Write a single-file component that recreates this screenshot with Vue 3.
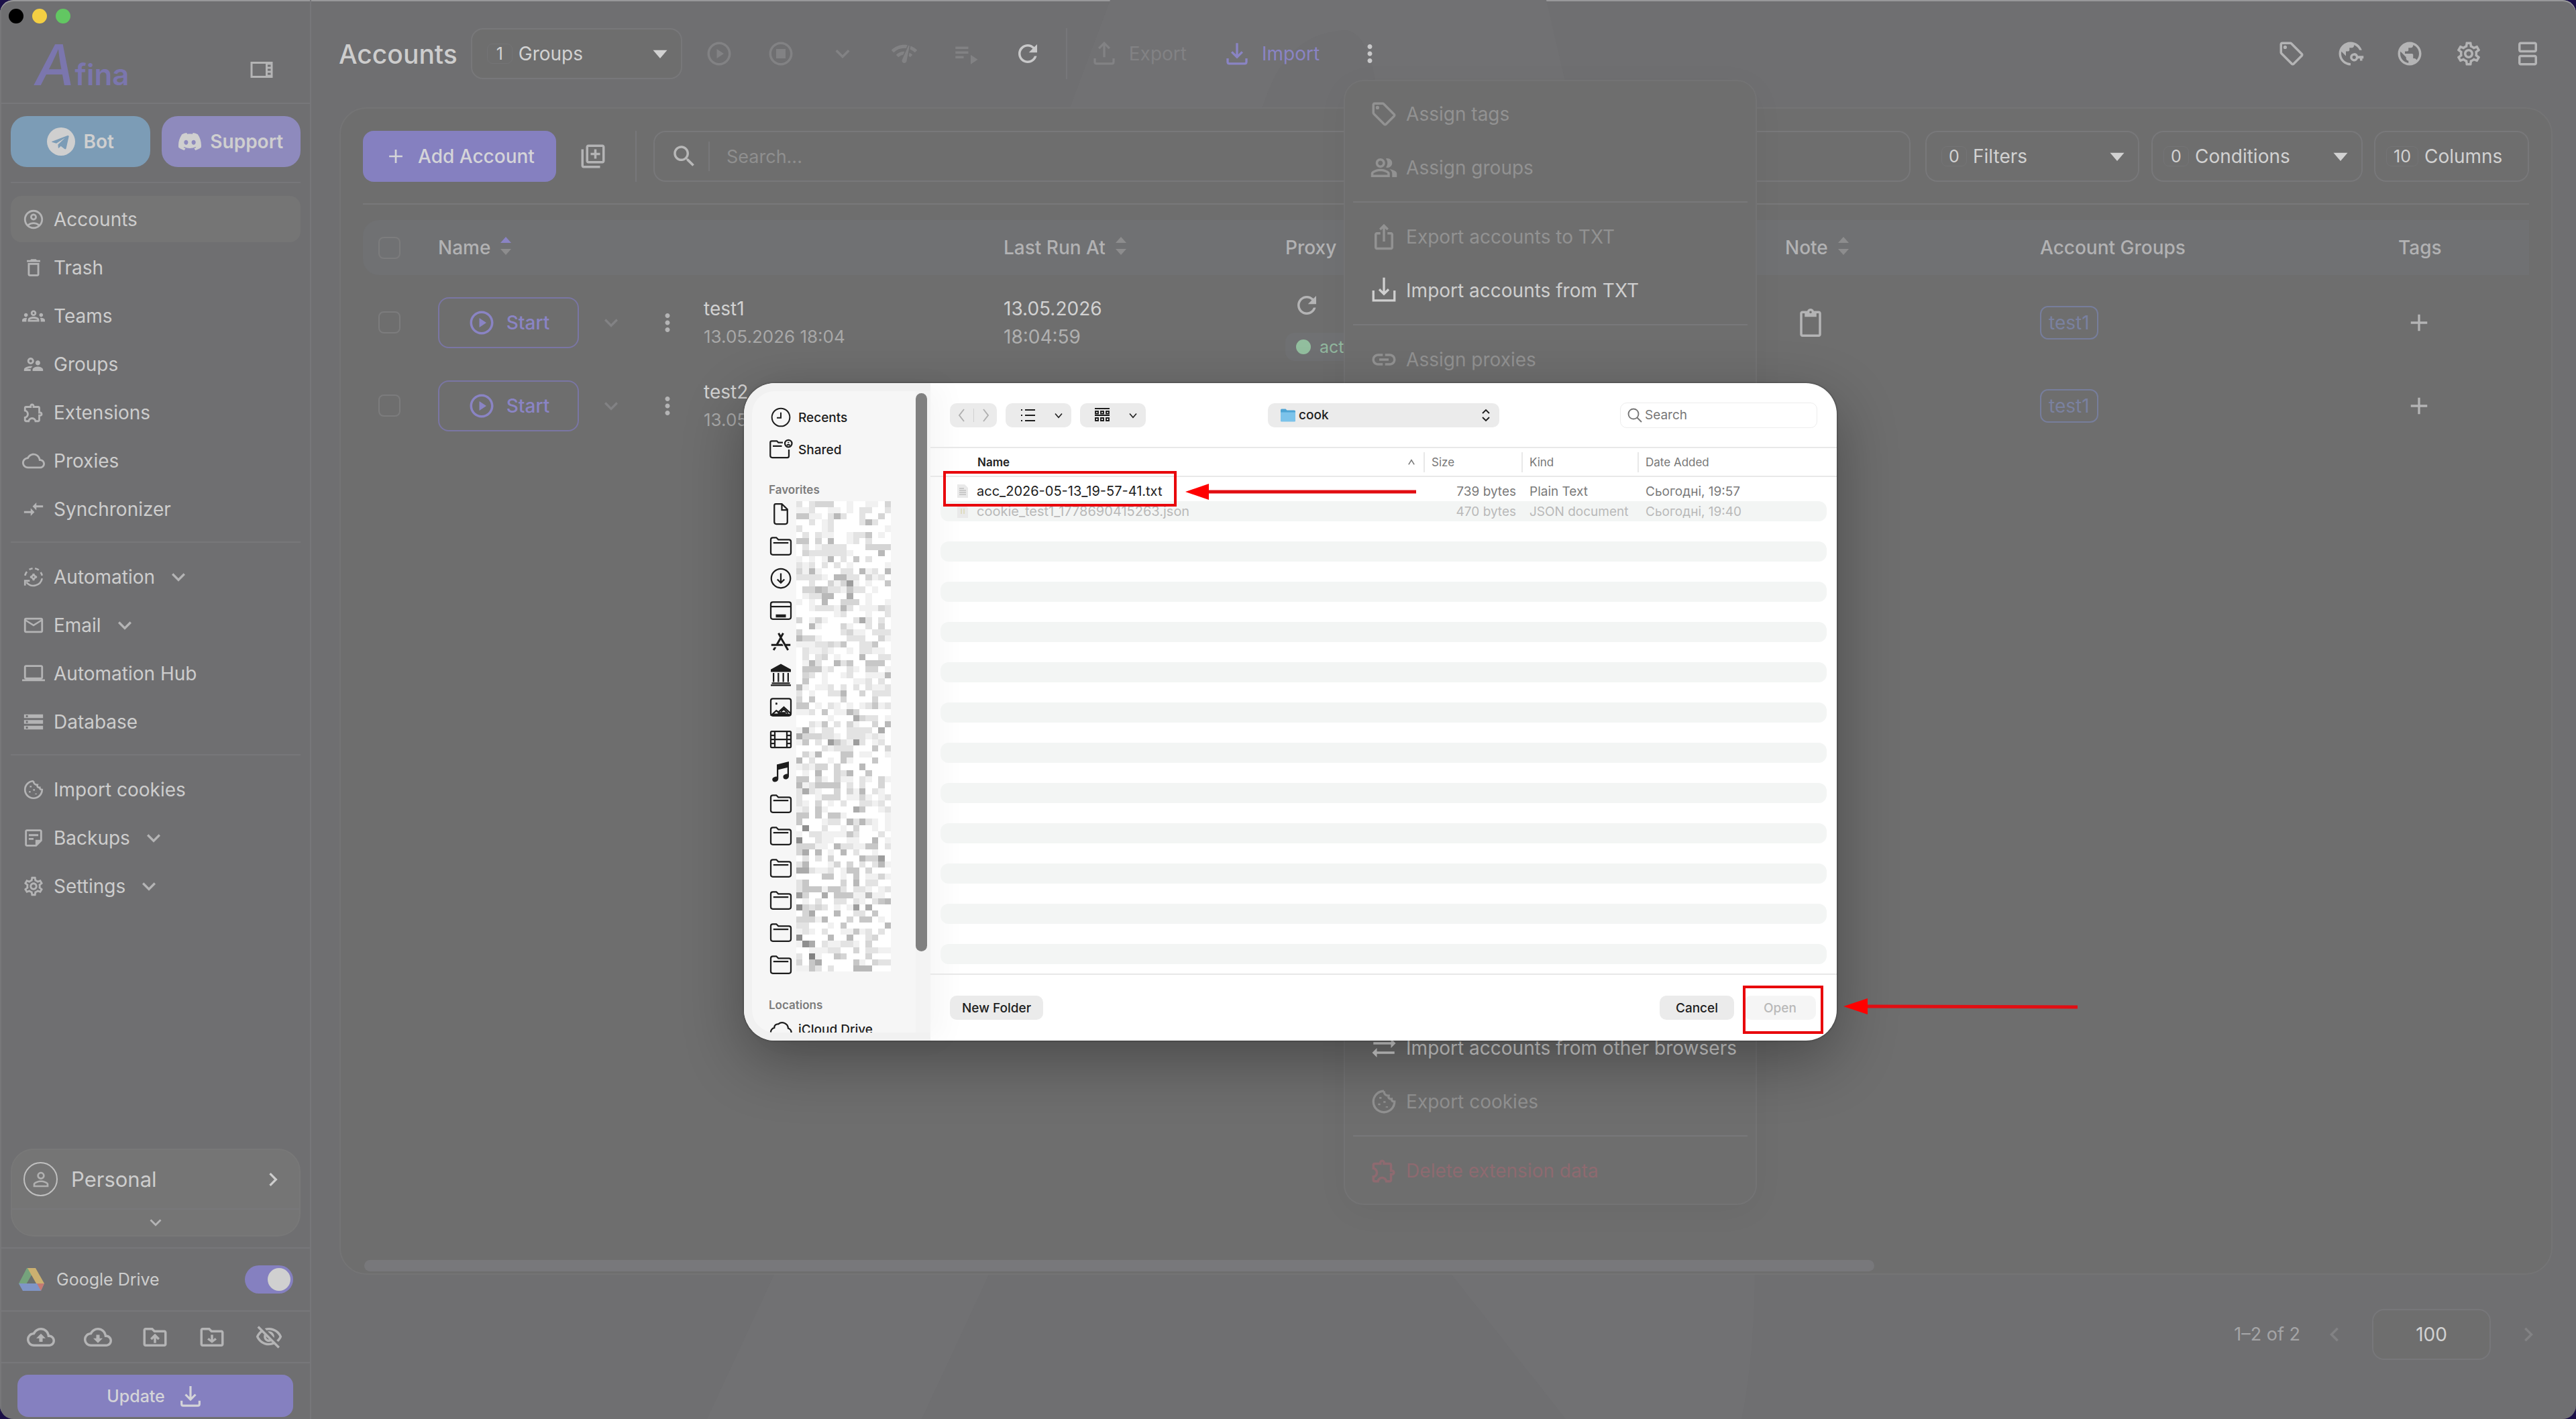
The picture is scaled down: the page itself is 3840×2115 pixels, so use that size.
<template>
  <div class="app">
    <aside class="sidebar">
      <div class="lights">
        <span class="light black"></span>
        <span class="light yellow"></span>
        <span class="light green"></span>
      </div>
      <div class="brand">
        <a href="#" class="logo"><span class="logo-a">A</span>fina</a>
        <button class="icon-btn" aria-label="Collapse sidebar"><Icon name="dock" class="i36" /></button>
      </div>
      <div class="socials">
        <button class="social bot">
          <svg viewBox="0 0 24 24" class="i42">
            <circle cx="12" cy="12" r="12" fill="#cfcfcf" />
            <path d="M4.5 11.8 17.6 6.9c.7-.2 1.2.2 1 1l-2.2 9.8c-.2.8-.7 1-1.4.6l-3.2-2.4-1.6 1.5c-.3.3-.6.2-.6-.2l-.2-2.7 6-5.6-7.4 4.7-3.4-1c-.7-.2-.8-.6-.1-.8z" fill="#7c9cb6" />
          </svg>
          Bot
        </button>
        <button class="social support"><Icon name="discord" class="i34" />Support</button>
      </div>
      <nav class="nav">
        <ul v-for="(group, i) in navGroups" :key="i" class="nav-group">
          <li v-for="item in group" :key="item.label">
            <a href="#" class="nav-item" :class="{ active: item.active }">
              <Icon :name="item.icon" class="i34" />
              <span>{{ item.label }}</span>
              <Icon v-if="item.more" name="down" class="i40 nav-more" />
            </a>
          </li>
        </ul>
      </nav>
      <div class="sidebar-bottom">
        <div class="profile">
          <button class="profile-main">
            <span class="avatar"><Icon name="person" class="i34" /></span>
            <span class="profile-name">Personal</span>
            <Icon name="right" class="i40" />
          </button>
          <button class="profile-more" aria-label="More profiles"><Icon name="down" class="i34" /></button>
        </div>
        <label class="drive">
          <svg viewBox="0 0 40 36" class="drive-logo">
            <path d="M13 1h13l-7 12-12 21L1 24z" fill="#75a37c" />
            <path d="M26 1l13 23H27L14 1z" fill="#cbb070" />
            <path d="M1 24h38l-5 11H7z" fill="#7f95c6" />
            <path d="M28 24h11l-5 11z" fill="#c57a72" />
            <path d="M20 13l6 11H14z" fill="#6b716d" />
          </svg>
          <span class="drive-name">Google Drive</span>
          <input type="checkbox" class="switch" checked />
        </label>
        <div class="tools">
          <button v-for="t in tools" :key="t" class="icon-btn" :aria-label="t"><Icon :name="t" class="i42" /></button>
        </div>
        <div class="update-wrap">
          <button class="update">Update<Icon name="download" class="i40" /></button>
        </div>
      </div>
    </aside>

    <main class="main">
      <svg class="watermark" viewBox="0 0 3376 2115" preserveAspectRatio="none">
        <path d="M1191 0H1841L1878 160H1592Q1580 45 1540 45Q1450 50 1418 160H1131z" />
        <path d="M690 1900H1010L910 2115H590z" />
        <path d="M1700 1900H2152Q2150 2030 2132 2115H1870z" />
      </svg>
      <header class="header">
        <h1>Accounts</h1>
        <label class="select groups">
          <span class="badge">1</span>
          <select aria-label="Groups"><option>Groups</option></select>
          <Icon name="caret" class="i42" />
        </label>
        <div class="actions">
          <button v-for="a in disabledActions" :key="a" class="icon-btn faded" :aria-label="a"><Icon :name="a" class="i42" /></button>
          <button class="icon-btn bright" aria-label="refresh"><Icon name="refresh" class="i42" /></button>
        </div>
        <span class="vline"></span>
        <div class="actions wide">
          <button class="text-btn faded"><Icon name="upload" class="i42" />Export</button>
          <button class="text-btn accent"><Icon name="download" class="i42" />Import</button>
          <div class="menu-anchor">
            <button class="icon-btn bright" aria-label="More actions"><Icon name="dots" class="i42" /></button>
            <div class="menu" role="menu">
              <template v-for="(m, i) in menu" :key="i">
                <div v-if="m.gap" class="menu-gap"></div>
                <div v-else-if="m.line" class="menu-line"></div>
                <button v-else class="menu-item" :class="m.tone" role="menuitem"><Icon :name="m.icon" class="i42" />{{ m.label }}</button>
              </template>
            </div>
          </div>
        </div>
        <div class="header-right">
          <button v-for="a in rightActions" :key="a" class="icon-btn" :aria-label="a"><Icon :name="a" class="i42" /></button>
        </div>
      </header>

      <section class="panel">
        <div class="toolbar">
          <button class="add"><Icon name="plus" class="i34" />Add Account</button>
          <button class="icon-btn copy" aria-label="Add several"><Icon name="library" class="i42" /></button>
          <span class="vline"></span>
          <label class="search">
            <Icon name="search" class="i42" />
            <input type="text" placeholder="Search..." aria-label="Search accounts" />
          </label>
          <label class="select filters">
            <span class="badge">0</span>
            <select aria-label="Filters"><option>Filters</option></select>
            <Icon name="caret" class="i42" />
          </label>
          <label class="select conditions">
            <span class="badge">0</span>
            <select aria-label="Conditions"><option>Conditions</option></select>
            <Icon name="caret" class="i42" />
          </label>
          <button class="select columns"><span class="badge">10</span>Columns</button>
        </div>

        <table class="accounts">
          <colgroup>
            <col class="c-check" /><col class="c-name" /><col class="c-run" /><col class="c-proxy" />
            <col class="c-note" /><col class="c-groups" /><col />
          </colgroup>
          <thead>
            <tr>
              <th class="check-cell"><input type="checkbox" aria-label="Select all" /></th>
              <th>Name<Icon name="sortUp" class="sort" /></th>
              <th>Last Run At<Icon name="sort" class="sort" /></th>
              <th>Proxy</th>
              <th>Note<Icon name="sort" class="sort" /></th>
              <th>Account Groups</th>
              <th>Tags</th>
            </tr>
          </thead>
          <tbody>
            <tr v-for="row in rows" :key="row.name">
              <td class="check-cell"><input type="checkbox" :aria-label="'Select ' + row.name" /></td>
              <td>
                <div class="name-cell">
                  <button class="start"><Icon name="play" class="i42" />Start</button>
                  <button class="icon-btn faded start-more" aria-label="Start options"><Icon name="down" class="i40" /></button>
                  <button class="icon-btn row-dots" aria-label="Row menu"><Icon name="dots" class="i42" /></button>
                  <div class="two-lines">
                    <span>{{ row.name }}</span>
                    <small>{{ row.created }}</small>
                  </div>
                </div>
              </td>
              <td>
                <div class="two-lines">
                  <span>{{ row.date }}</span>
                  <span class="time">{{ row.time }}</span>
                </div>
              </td>
              <td>
                <div v-if="row.proxy" class="proxy-cell">
                  <button class="icon-btn" aria-label="Check proxy"><Icon name="refresh" class="i42" /></button>
                  <span class="status">{{ row.proxy }}</span>
                </div>
              </td>
              <td><button class="icon-btn note" aria-label="Note"><Icon name="clipboard" class="i42" /></button></td>
              <td><span class="group-tag">{{ row.group }}</span></td>
              <td><button class="icon-btn add-tag" aria-label="Add tag"><Icon name="plus" class="i42" /></button></td>
            </tr>
          </tbody>
        </table>
        <div class="hscroll"><div class="hthumb"></div></div>
      </section>

      <footer class="pager">
        <span>1–2 of 2</span>
        <button class="icon-btn faded" aria-label="Previous page"><Icon name="left" class="i42" /></button>
        <input type="text" value="100" aria-label="Rows per page" />
        <button class="icon-btn faded" aria-label="Next page"><Icon name="right" class="i42" /></button>
      </footer>
    </main>

    <!-- system file picker -->
    <div class="overlay">
      <div class="dialog" role="dialog" aria-label="Open file">
        <aside class="places">
          <div class="places-list">
            <a href="#" class="place"><Icon name="clock" class="i32" />Recents</a>
            <a href="#" class="place"><Icon name="shared" class="i36" />Shared</a>
            <h2>Favorites</h2>
            <div class="favorites">
              <a v-for="(f, i) in favorites" :key="i" href="#" class="place" aria-label="Favorite"><Icon :name="f" class="i36" /></a>
              <svg class="mosaic" viewBox="0 0 15 77" preserveAspectRatio="none" shape-rendering="crispEdges">
                <rect v-for="c in mosaic" :key="c.key" :x="c.x" :y="c.y" width="1" height="1" :fill="c.fill" />
              </svg>
            </div>
            <h2>Locations</h2>
            <a href="#" class="place"><Icon name="icloud" class="i36" />iCloud Drive</a>
          </div>
          <div class="vtrack"><div class="vthumb"></div></div>
        </aside>
        <div class="browser">
          <div class="picker-bar">
            <div class="pill nav-pill">
              <button aria-label="Back"><Icon name="thinLeft" class="i24" /></button>
              <span class="pill-line"></span>
              <button aria-label="Forward"><Icon name="thinRight" class="i24" /></button>
            </div>
            <button class="pill view-pill" aria-label="List view"><Icon name="list" class="i24" /><Icon name="boldDown" class="i20" /></button>
            <button class="pill view-pill" aria-label="Group items"><Icon name="grid" class="i24" /><Icon name="boldDown" class="i20" /></button>
            <label class="pill folder">
              <svg viewBox="0 0 24 24" class="i24">
                <path d="M1 4q0-1.500 1.500-1.500h6l2 2h11q1.500 0 1.500 1.500v15H1z" fill="#4ea4d4" />
                <path d="M1 7.500h22V20q0 1.500-1.500 1.500h-19Q1 21.500 1 20z" fill="#7cc3ea" />
              </svg>
              <select aria-label="Folder"><option>cook</option></select>
              <Icon name="updown" class="i24" />
            </label>
            <label class="find">
              <Icon name="thinSearch" class="i24" />
              <input type="text" placeholder="Search" aria-label="Search files" />
            </label>
          </div>
          <table class="files">
            <colgroup>
              <col class="f-gutter" /><col /><col class="f-size" /><col class="f-kind" /><col class="f-date" /><col class="f-gutter" />
            </colgroup>
            <thead>
              <tr>
                <th></th>
                <th class="f-name"><div><b>Name</b><Icon name="thinUp" class="i20" /></div></th>
                <th><div class="split">Size</div></th>
                <th><div class="split">Kind</div></th>
                <th><div class="split">Date Added</div></th>
                <th></th>
              </tr>
            </thead>
            <tbody>
              <tr v-for="(f, i) in files" :key="i" :class="f.state">
                <td></td>
                <td class="f-name">
                  <div v-if="f.name">
                    <svg viewBox="0 0 18 22" class="file-icon">
                      <path d="M1 1h11l5 5v15H1z" fill="#e9e9e9" />
                      <path v-if="f.state === 'ready'" d="M4 7h7M4 10h10M4 13h10M4 16h10" stroke="#aaa" fill="none" />
                      <path v-else d="M7 7v8M11 7v8" stroke="#d6cf9a" fill="none" />
                    </svg>
                    {{ f.name }}
                  </div>
                </td>
                <td class="f-right">{{ f.size }}</td>
                <td>{{ f.kind }}</td>
                <td>{{ f.date }}</td>
                <td></td>
              </tr>
            </tbody>
          </table>
          <div class="picker-footer">
            <button class="pill">New Folder</button>
            <span class="grow"></span>
            <button class="pill cancel">Cancel</button>
            <button class="pill off" disabled>Open</button>
          </div>
        </div>
        <svg class="marks" viewBox="0 0 2000 980">
          <g fill="none" stroke="#e8050c" stroke-width="4">
            <rect x="299" y="133" width="344" height="49" />
            <rect x="1491" y="900" width="116" height="68" />
          </g>
          <g fill="none" stroke="#e20d12" stroke-width="5">
            <path d="M690 162H1002" />
            <path d="M1672 929L1988 930" />
          </g>
          <g fill="#fe0000">
            <path d="M658 162l35-12v24z" />
            <path d="M1639 929l36-12v24z" />
          </g>
        </svg>
      </div>
    </div>
  </div>
</template>

<script setup>
import { h } from "vue";

const circle = "M12 2C6.48 2 2 6.48 2 12s4.48 10 10 10 10-4.48 10-10S17.52 2 12 2m0 18c-4.41 0-8-3.59-8-8s3.59-8 8-8 8 3.59 8 8-3.59 8-8 8";
const cloud = "M19.35 10.04C18.67 6.59 15.64 4 12 4 9.11 4 6.6 5.64 5.35 8.04 2.34 8.36 0 10.91 0 14c0 3.31 2.69 6 6 6h13c2.76 0 5-2.24 5-5 0-2.64-2.05-4.78-4.65-4.96M19 18H6c-2.21 0-4-1.79-4-4 0-2.05 1.53-3.76 3.56-3.97l1.07-.11.5-.95C8.08 7.14 9.94 6 12 6c2.62 0 4.88 1.86 5.39 4.43l.3 1.5 1.53.11c1.56.1 2.78 1.41 2.78 2.96 0 1.65-1.35 3-3 3";
const folder = "M20 6h-8l-2-2H4c-1.1 0-1.99.9-1.99 2L2 18c0 1.1.9 2 2 2h16c1.1 0 2-.9 2-2V8c0-1.1-.9-2-2-2m0 12H4V6h5.17l2 2H20z";

// filled icons
const fills = {
  dock: "M1 4h22v16H1zM3 6v12h13V6zM18 7v2h3V7zm0 4v2h3v-2zm0 4v2h3v-2z",
  discord: "M20.317 4.3698a19.7913 19.7913 0 00-4.8851-1.5152.0741.0741 0 00-.0785.0371c-.211.3753-.4447.8648-.6083 1.2495-1.8447-.2762-3.68-.2762-5.4868 0-.1636-.3933-.4058-.8742-.6177-1.2495a.077.077 0 00-.0785-.037 19.7363 19.7363 0 00-4.8852 1.515.0699.0699 0 00-.0321.0277C.5334 9.0458-.319 13.5799.0992 18.0578a.0824.0824 0 00.0312.0561c2.0528 1.5076 4.0413 2.4228 5.9929 3.0294a.0777.0777 0 00.0842-.0276c.4616-.6304.8731-1.2952 1.226-1.9942a.076.076 0 00-.0416-.1057c-.6528-.2476-1.2743-.5495-1.8722-.8923a.077.077 0 01-.0076-.1277c.1258-.0943.2517-.1923.3718-.2914a.0743.0743 0 01.0776-.0105c3.9278 1.7933 8.18 1.7933 12.0614 0a.0739.0739 0 01.0785.0095c.1202.099.246.1981.3728.2924a.077.077 0 01-.0066.1276 12.2986 12.2986 0 01-1.873.8914.0766.0766 0 00-.0407.1067c.3604.698.7719 1.3628 1.225 1.9932a.076.076 0 00.0842.0286c1.961-.6067 3.9495-1.5219 6.0023-3.0294a.077.077 0 00.0313-.0552c.5004-5.177-.8382-9.6739-3.5485-13.6604a.061.061 0 00-.0312-.0286zM8.02 15.3312c-1.1825 0-2.1569-1.0857-2.1569-2.419 0-1.3332.9555-2.4189 2.157-2.4189 1.2108 0 2.1757 1.0952 2.1568 2.419 0 1.3332-.9555 2.4189-2.1569 2.4189zm7.9748 0c-1.1825 0-2.1569-1.0857-2.1569-2.419 0-1.3332.9554-2.4189 2.1569-2.4189 1.2108 0 2.1757 1.0952 2.1568 2.419 0 1.3332-.946 2.4189-2.1568 2.4189Z",
  account: "M12 2C6.48 2 2 6.48 2 12s4.48 10 10 10 10-4.48 10-10S17.52 2 12 2M7.35 18.5C8.66 17.56 10.26 17 12 17s3.34.56 4.65 1.5c-1.31.94-2.91 1.5-4.65 1.5s-3.34-.56-4.65-1.5m10.79-1.38C16.45 15.8 14.32 15 12 15s-4.45.8-6.14 2.12C4.7 15.73 4 13.95 4 12c0-4.42 3.58-8 8-8s8 3.58 8 8c0 1.95-.7 3.73-1.86 5.12M12 6c-1.93 0-3.5 1.57-3.5 3.5S10.07 13 12 13s3.5-1.57 3.5-3.5S13.93 6 12 6m0 5c-.83 0-1.5-.67-1.5-1.5S11.17 8 12 8s1.5.67 1.5 1.5S12.83 11 12 11",
  trash: "M6 19c0 1.1.9 2 2 2h8c1.1 0 2-.9 2-2V7H6zM8 9h8v10H8zm7.5-5-1-1h-5l-1 1H5v2h14V4z",
  teams: "M4 13c1.1 0 2-.9 2-2s-.9-2-2-2-2 .9-2 2 .9 2 2 2m1.13 1.1C4.76 14.04 4.39 14 4 14c-.99 0-1.93.21-2.78.58C.48 14.9 0 15.62 0 16.43V18h4.5v-1.61c0-.83.23-1.61.63-2.29M20 13c1.1 0 2-.9 2-2s-.9-2-2-2-2 .9-2 2 .9 2 2 2m4 3.43c0-.81-.48-1.53-1.22-1.85C21.93 14.21 20.99 14 20 14c-.39 0-.76.04-1.13.1.4.68.63 1.46.63 2.29V18H24zm-7.76-2.78c-1.17-.52-2.61-.9-4.24-.9s-3.07.39-4.24.9C6.68 14.13 6 15.21 6 16.39V18h12v-1.61c0-1.18-.68-2.26-1.76-2.74M8.07 16c.09-.23.13-.39.91-.69.97-.38 1.99-.56 3.02-.56s2.05.18 3.02.56c.77.3.81.46.91.69zM12 8c.55 0 1 .45 1 1s-.45 1-1 1-1-.45-1-1 .45-1 1-1m0-2c-1.66 0-3 1.34-3 3s1.34 3 3 3 3-1.34 3-3-1.34-3-3-3",
  groups: "M9 12c1.93 0 3.5-1.57 3.5-3.5S10.93 5 9 5 5.5 6.57 5.5 8.5 7.07 12 9 12m0-5c.83 0 1.5.67 1.5 1.5S9.83 10 9 10s-1.5-.67-1.5-1.5S8.17 7 9 7m.05 10H4.77c.99-.5 2.7-1 4.23-1 .11 0 .23.01.34.01.34-.73.93-1.33 1.64-1.81-.73-.13-1.42-.2-1.98-.2-2.34 0-7 1.17-7 3.5V19h7v-1.5c0-.17.02-.34.05-.5m7.45-2.5c-1.84 0-5.5 1.01-5.5 3V19h11v-1.5c0-1.99-3.66-3-5.5-3m1.21-1.82c.76-.43 1.29-1.24 1.29-2.18C19 9.12 17.88 8 16.500 8S14 9.12 14 10.500c0 .94.53 1.75 1.29 2.18.36.2.77.32 1.21.32s.85-.12 1.21-.32",
  extension: "M10.5 4.5c.28 0 .5.22.5.5v2h6v6h2c.28 0 .5.22.5.5s-.22.5-.5.5h-2v6h-2.120c-.68-1.750-2.390-3-4.380-3s-3.700 1.250-4.380 3H4v-2.120c1.750-.68 3-2.390 3-4.380 0-1.990-1.240-3.700-2.990-4.380L4 7h6V5c0-.28.22-.5.5-.5m0-2C9.120 2.5 8 3.620 8 5H4c-1.100 0-1.990.9-1.990 2v3.800h.29c1.490 0 2.700 1.210 2.700 2.700s-1.210 2.700-2.700 2.700H2V20c0 1.100.9 2 2 2h3.800v-.3c0-1.490 1.210-2.700 2.700-2.700s2.700 1.210 2.700 2.700v.3H17c1.100 0 2-.9 2-2v-4c1.380 0 2.500-1.120 2.500-2.500S20.380 11 19 11V7c0-1.100-.9-2-2-2h-4c0-1.380-1.120-2.500-2.500-2.500",
  proxy: cloud,
  sync: "M9.01 14H2v2h7.01v3L13 15l-3.99-4zm5.98-1v-3H22V8h-7.01V5L11 9z",
  email: "M22 6c0-1.1-.9-2-2-2H4c-1.1 0-2 .9-2 2v12c0 1.1.9 2 2 2h16c1.1 0 2-.9 2-2zm-2 0-8 5-8-5zm0 12H4V8l8 5 8-5z",
  laptop: "M20 18c1.1 0 1.99-.9 1.99-2L22 5c0-1.1-.9-2-2-2H4c-1.1 0-2 .9-2 2v11c0 1.1.9 2 2 2H0v2h24v-2zM4 5h16v11H4z",
  database: "M2 20h20v-4H2zm2-3h2v2H4zM2 4v4h20V4zm4 3H4V5h2zm-4 7h20v-4H2zm2-3h2v2H4z",
  note: "M19 5v9h-5v5H5V5zm0-2H5c-1.100 0-2 .9-2 2v14c0 1.100.9 2 2 2h10l6-6V5c0-1.100-.9-2-2-2m-7 11H7v-2h5zm5-4H7V8h10z",
  settings: "M19.43 12.98c.04-.32.07-.64.07-.98 0-.34-.03-.66-.07-.98l2.11-1.65c.19-.15.24-.42.12-.64l-2-3.46c-.09-.16-.26-.25-.44-.25-.06 0-.12.01-.17.03l-2.49 1c-.52-.4-1.08-.73-1.69-.98l-.38-2.65C14.46 2.18 14.25 2 14 2h-4c-.25 0-.46.18-.49.42l-.38 2.65c-.61.25-1.17.59-1.69.98l-2.49-1c-.06-.02-.12-.03-.18-.03-.17 0-.34.09-.43.25l-2 3.46c-.13.22-.07.49.12.64l2.11 1.65c-.04.32-.07.65-.07.98 0 .33.03.66.07.98l-2.11 1.65c-.19.15-.24.42-.12.64l2 3.46c.09.16.26.25.44.25.06 0 .12-.01.17-.03l2.49-1c.52.4 1.08.73 1.69.98l.38 2.65c.03.24.24.42.49.42h4c.25 0 .46-.18.49-.42l.38-2.65c.61-.25 1.17-.59 1.69-.98l2.49 1c.06.02.12.03.18.03.17 0 .34-.09.43-.25l2-3.46c.12-.22.07-.49-.12-.64zm-1.98-1.71c.04.31.05.52.05.73 0 .21-.02.43-.05.73l-.14 1.13.89.7 1.08.84-.7 1.21-1.27-.51-1.04-.42-.9.68c-.43.32-.84.56-1.25.73l-1.06.43-.16 1.13-.2 1.35h-1.4l-.19-1.35-.16-1.13-1.06-.43c-.43-.18-.83-.41-1.23-.71l-.91-.7-1.06.43-1.27.51-.7-1.21 1.08-.84.89-.7-.14-1.13c-.03-.31-.05-.54-.05-.74s.02-.43.05-.73l.14-1.13-.89-.7-1.08-.84.7-1.21 1.27.51 1.04.42.9-.68c.43-.32.84-.56 1.25-.73l1.06-.43.16-1.13.2-1.35h1.39l.19 1.35.16 1.13 1.06.43c.43.18.83.41 1.23.71l.91.7 1.06-.43 1.27-.51.7 1.21-1.07.85-.89.7zM12 8c-2.21 0-4 1.79-4 4s1.79 4 4 4 4-1.79 4-4-1.79-4-4-4m0 6c-1.1 0-2-.9-2-2s.9-2 2-2 2 .9 2 2-.9 2-2 2",
  down: "M7.41 8.59 12 13.17l4.59-4.58L18 10l-6 6-6-6z",
  right: "M8.59 16.59 13.17 12 8.59 7.41 10 6l6 6-6 6z",
  left: "M15.41 7.41 14 6l-6 6 6 6 1.41-1.41L10.83 12z",
  person: "M12 5.9c1.16 0 2.1.94 2.1 2.1s-.94 2.1-2.1 2.1S9.9 9.16 9.9 8s.94-2.1 2.1-2.1m0 9c2.97 0 6.1 1.46 6.1 2.1v1.1H5.9V17c0-.64 3.13-2.1 6.1-2.1M12 4C9.79 4 8 5.79 8 8s1.79 4 4 4 4-1.79 4-4-1.79-4-4-4m0 9c-2.67 0-8 1.34-8 4v3h16v-3c0-2.66-5.33-4-8-4",
  cloudUp: cloud + "M8 13h2.55v3h2.9v-3H16l-4-4z",
  cloudDown: cloud + "M13.45 10h-2.9v3H8l4 4 4-4h-2.55z",
  folderUp: folder + "M9.41 14.42 11 12.84V17h2v-4.16l1.59 1.59L16 13.01 12.01 9 8 13.01z",
  folderDown: folder + "M14.59 12.58 13 14.16V10h-2v4.17l-1.59-1.590L8 13.990 12 17l4-3.010z",
  hidden: "M12 6c3.79 0 7.17 2.13 8.82 5.5-.59 1.22-1.42 2.27-2.41 3.12l1.41 1.41c1.39-1.23 2.49-2.77 3.18-4.53C21.27 7.11 17 4 12 4c-1.27 0-2.49.2-3.64.57l1.65 1.65C10.66 6.09 11.32 6 12 6m-1.07 1.14L13 9.21c.57.25 1.03.71 1.28 1.28l2.07 2.07c.08-.34.14-.7.14-1.07C16.5 9.01 14.48 7 12 7c-.37 0-.72.05-1.07.14M2.01 3.87l2.68 2.68C3.06 7.83 1.77 9.53 1 11.5 2.73 15.89 7 19 12 19c1.52 0 2.98-.29 4.32-.82l3.42 3.42 1.41-1.41L3.42 2.45zm7.5 7.5 2.61 2.61c-.04.01-.08.02-.12.02-1.38 0-2.5-1.12-2.5-2.5 0-.05.01-.08.01-.13m-3.4-3.4 1.75 1.75c-.23.55-.36 1.15-.36 1.78 0 2.48 2.02 4.5 4.5 4.5.63 0 1.23-.13 1.77-.36l.98.98c-.88.24-1.8.38-2.75.38-3.79 0-7.17-2.13-8.82-5.5.7-1.43 1.72-2.61 2.93-3.53",
  play: circle + "M10 8v8l6-4z",
  stop: circle + "M8 8h8v8H8z",
  refresh: "M17.65 6.35C16.2 4.9 14.21 4 12 4c-4.42 0-7.99 3.58-7.99 8s3.57 8 7.99 8c3.73 0 6.84-2.55 7.73-6h-2.08c-.82 2.33-3.04 4-5.65 4-3.31 0-6-2.69-6-6s2.69-6 6-6c1.66 0 3.14.69 4.22 1.78L13 11h7V4z",
  network: "M15.9 5c-.17 0-.32.09-.41.23l-.07.15-5.18 11.65c-.16.29-.26.61-.26.96 0 1.11.9 2.01 2.01 2.01.96 0 1.77-.68 1.96-1.59l.01-.03L16.4 5.5c0-.28-.22-.5-.5-.5M1 9l2 2c2.88-2.88 6.79-4.08 10.53-3.62l1.19-2.68C9.89 3.84 4.74 5.27 1 9m20 2 2-2c-1.64-1.64-3.55-2.82-5.59-3.57l-.53 2.82c1.5.62 2.9 1.53 4.12 2.75m-4 4 2-2c-.8-.8-1.7-1.42-2.66-1.89l-.55 2.92c.42.27.83.59 1.21.97M5 13l2 2c1.13-1.13 2.56-1.79 4.03-2l1.28-2.88c-2.63-.08-5.3.87-7.31 2.88",
  playlist: "M3 10h11v2H3zm0-4h11v2H3zm0 8h7v2H3zm13-1v8l6-4z",
  dots: "M12 8c1.1 0 2-.9 2-2s-.9-2-2-2-2 .9-2 2 .9 2 2 2m0 2c-1.1 0-2 .9-2 2s.9 2 2 2 2-.9 2-2-.9-2-2-2m0 6c-1.1 0-2 .9-2 2s.9 2 2 2 2-.9 2-2-.9-2-2-2",
  tag: "m21.41 11.58-9-9C12.05 2.22 11.55 2 11 2H4c-1.1 0-2 .9-2 2v7c0 .55.22 1.05.59 1.42l9 9c.36.36.86.58 1.41.58s1.05-.22 1.41-.59l7-7c.37-.36.59-.86.59-1.41s-.23-1.06-.59-1.42M13 20.01 4 11V4h7v-.01l9 9zM6.500 5a1.500 1.500 0 1 0 0 3 1.500 1.500 0 0 0 0-3",
  globe: "M12 2C6.48 2 2 6.48 2 12s4.48 10 10 10 10-4.48 10-10S17.52 2 12 2m-1 17.93c-3.95-.49-7-3.85-7-7.93 0-.62.08-1.21.21-1.79L9 15v1c0 1.1.9 2 2 2zm6.9-2.54c-.26-.81-1-1.39-1.9-1.39h-1v-3c0-.55-.45-1-1-1H8v-2h2c.55 0 1-.45 1-1V7h2c1.1 0 2-.9 2-2v-.41c2.93 1.19 5 4.06 5 7.41 0 2.08-.8 3.97-2.1 5.39",
  globeKey: "M12 2C6.48 2 2 6.48 2 12s4.480 10 10 10v-2.070c-.3 0-.7 0-1-.1C7 19.400 4 16 4 12c0-.6.1-1.200.2-1.800L8 14v-4h2c.6 0 1-.4 1-1V7h2c1.100 0 2-.9 2-2v-.4c2 .9 3.700 2.400 4.500 4.400h2.100C20.400 5 16.600 2 12 2m3 9.500a3.500 3.500 0 1 0 3.300 4.700H20V18h2v-1.800h1v-2.400h-4.700a3.500 3.500 0 0 0-3.300-2.300m0 2a1.500 1.500 0 1 1 0 3 1.500 1.500 0 0 1 0-3",
  split: "M18 2H6c-1.100 0-2 .9-2 2v5c0 1.100.9 2 2 2h12c1.100 0 2-.9 2-2V4c0-1.100-.9-2-2-2m0 7H6V4h12zm0 4H6c-1.100 0-2 .9-2 2v5c0 1.100.9 2 2 2h12c1.100 0 2-.9 2-2v-5c0-1.100-.9-2-2-2m0 7H6v-5h12z",
  library: "M4 6H2v14c0 1.1.9 2 2 2h14v-2H4zm16-4H8c-1.1 0-2 .9-2 2v12c0 1.1.9 2 2 2h12c1.1 0 2-.9 2-2V4c0-1.1-.9-2-2-2m0 14H8V4h12zm-7-2h2v-3h3V9h-3V6h-2v3h-3v2h3z",
  search: "M15.5 14h-.79l-.28-.27C15.41 12.59 16 11.11 16 9.5 16 5.91 13.09 3 9.5 3S3 5.91 3 9.5 5.91 16 9.5 16c1.61 0 3.09-.59 4.23-1.57l.27.28v.79l5 4.99L20.49 19zm-6 0C7.01 14 5 11.99 5 9.5S7.01 5 9.5 5 14 7.01 14 9.5 11.99 14 9.5 14",
  people: "M16.67 13.13C18.04 14.06 19 15.32 19 17v3h4v-3c0-2.18-3.57-3.47-6.33-3.87M15 12c2.21 0 4-1.79 4-4s-1.79-4-4-4c-.47 0-.91.1-1.33.24C14.5 5.27 15 6.58 15 8s-.5 2.73-1.33 3.76c.42.14.86.24 1.33.24m-6 0c2.21 0 4-1.79 4-4s-1.79-4-4-4-4 1.79-4 4 1.79 4 4 4m0-6c1.1 0 2 .9 2 2s-.9 2-2 2-2-.9-2-2 .9-2 2-2m0 7c-2.67 0-8 1.34-8 4v3h16v-3c0-2.66-5.33-4-8-4m6 5H3v-.99C3.2 16.29 6.3 15 9 15s5.8 1.29 6 2z",
  share: "m16 5-1.42 1.42-1.59-1.59V16h-1.98V4.83L9.42 6.42 8 5l4-4zm4 5v11c0 1.1-.9 2-2 2H6c-1.11 0-2-.9-2-2V10c0-1.11.89-2 2-2h3v2H6v11h12V10h-3V8h3c1.1 0 2 .89 2 2",
  link: "M17 7h-4v2h4c1.65 0 3 1.35 3 3s-1.35 3-3 3h-4v2h4c2.76 0 5-2.24 5-5s-2.24-5-5-5m-6 8H7c-1.65 0-3-1.35-3-3s1.35-3 3-3h4V7H7c-2.76 0-5 2.24-5 5s2.24 5 5 5h4zm-3-4h8v2H8z",
  swap: "M22 8l-4-4v3H3v2h15v3zM2 16l4 4v-3h15v-2H6v-3z",
  clipboard: "M19 2h-4.18C14.4.84 13.3 0 12 0S9.6.84 9.18 2H5c-1.1 0-2 .9-2 2v18c0 1.100.9 2 2 2h14c1.100 0 2-.9 2-2V4c0-1.100-.9-2-2-2m-7 0c.55 0 1 .45 1 1s-.45 1-1 1-1-.45-1-1 .45-1 1-1m7 20H5V4h2v3h10V4h2z",
  caret: "M6 9h12l-6 7z",
  appstore: "M10.500 2l1.500 2.500L13.500 2l1.700 1-2.200 3.800 3.700 6.400h4.800v2h-3.600l2.100 3.700-1.700 1L12 9l-2.400 4.200h3.900l1.100 2H2.500v-2h4.800l3.600-6.400L8.800 3zM5.300 16.500h2.300l-2 3.400-1.700-1z",
  bank: "M12 1 2 6.500V9h20V6.500zM4 10h1.500v9H4zm4.800 0h1.500v9H8.800zm4.900 0h1.500v9h-1.500zm4.800 0H20v9h-1.500zM3 19.500h18V21H3zM2 21.500h20V23H2z",
  music: "M8 5l12-3v14.500c0 1.900-1.500 3.200-3.200 3.200-1.600 0-2.500-1-2.500-2.300 0-2 2-3 4.200-3V8l-9 2.200V19c0 2-1.600 3.300-3.400 3.300C4.500 22.300 3.500 21.300 3.500 20c0-2 2-3 4.500-3z",
};

// outlined icons
const strokes = {
  robot: "M3 10.500a9.300 9.300 0 0 1 2-4M7.500 4.200a9.500 9.500 0 0 1 3.500-1.200M13.500 3a9.500 9.500 0 0 1 4 1.700M19.500 7a9 9 0 0 1 1.500 3.500M21 13.500a9.300 9.300 0 0 1-16.500 4M3 21v-5h5M12 8.500q.5 3 3.500 3.500-3 .5-3.500 3.500-.5-3-3.500-3.500 3-.5 3.500-3.500",
  cookie: "M12 3a9 9 0 1 0 9 9c-1.500 0-2.500-.8-2.500-2.300-2 .3-3-1-2.500-2.700C13.500 7 12 5.500 12 3M9 8v1.500M8 13.500V15M12.500 11.500v1.500M14.500 16v1",
  upload: "M12 15V3M7.500 7.500 12 3l4.500 4.500M4 16v3q0 1.500 1.500 1.500h13Q20 20.500 20 19v-3",
  download: "M12 3v12M7.500 10.500 12 15l4.500-4.500M4 16v3q0 1.500 1.500 1.500h13Q20 20.500 20 19v-3",
  tray: "M12 1v14M8 11l4 4 4-4M3 12v8.500h18V12",
  plus: "M12 5v14M5 12h14",
  clock: "M12 2a10 10 0 1 0 0 20 10 10 0 0 0 0-20M12 6.500V12.500H7.500",
  shared: "M14 5H9.500L8 3.500H3Q1.500 3.500 1.500 5v13Q1.500 20 3.500 20h15q1.500 0 1.500-1.500V12M4 8.500h9M19.500 2.500a3.500 3.500 0 1 0 0 7 3.500 3.500 0 0 0 0-7M19.500 4.500v1M18 8q1.500-2 3 0",
  doc: "M7 2h6l5.500 5.500V20Q18.500 22 16.500 22h-9Q5.500 22 5.500 20V3.500Q5.500 2 7 2M13 2.500V8h5.500",
  dir: "M2 5.500Q2 3.500 4 3.500h3.500L9.500 5.500H20Q22 5.500 22 7.500V18.500Q22 20.500 20 20.500H4Q2 20.500 2 18.500zM4.500 8.800h15",
  downloads: "M12 2.500a9.500 9.500 0 1 0 0 19 9.500 9.500 0 0 0 0-19M12 7v9.500M8.500 13l3.500 3.500 3.500-3.500",
  desktop: "M4 3.500H20Q22 3.500 22 5.500V18.500Q22 20.500 20 20.500H4Q2 20.500 2 18.500V5.500Q2 3.500 4 3.500M2 8h20M7 16.500h10M7 18h10",
  picture: "M4 3.500H20Q22 3.500 22 5.500V18.500Q22 20.500 20 20.500H4Q2 20.500 2 18.500V5.500Q2 3.500 4 3.500M3 19.500l4.500-4 2 1.500 5.500-5 6.500 6v1.500zM5 19h15M12 16.500l3-2.500 4 4M9 17.500h8M7.500 7.500v2M6.700 8.500h1.800",
  film: "M3 4H21Q22 4 22 5V19Q22 20 21 20H3Q2 20 2 19V5Q2 4 3 4M6 4v16M18 4v16M6 12h12M2 8h4M2 12h4M2 16h4M18 8h4M18 12h4M18 16h4",
  icloud: "M6.500 19.500a4.500 4.500 0 0 1-1-8.900 3.500 3.500 0 0 1 4-3.700 6 6 0 0 1 9.800 4.200 4.300 4.300 0 0 1-.8 8.400z",
  thinLeft: "M15 3 8 12l7 9",
  thinRight: "M9 3l7 9-7 9",
  thinUp: "M7 16l5-8 5 8",
  boldDown: "M6 9l6 7 6-7",
  updown: "M7 9l5-5 5 5M7 15l5 5 5-5",
  list: "M8 4h15M8 12h15M8 20h15M2 4h2M2 12h2M2 20h2",
  grid: "M1 2h22M1 12h22M2 6h4v3.500H2zM10 6h4v3.500h-4zM18 6h4v3.500h-4zM2 16h4v4H2zM10 16h4v4h-4zM18 16h4v4h-4z",
  thinSearch: "M10 2.500a7.500 7.500 0 1 0 0 15 7.500 7.500 0 0 0 0-15M15.500 15.500l6.500 6.500",
};

const Icon = (props) => {
  if (props.name === "sort" || props.name === "sortUp") {
    return h("svg", { viewBox: "0 0 18 30", fill: "currentColor", "aria-hidden": "true" }, [
      h("path", { d: "M1 10 9 1l8 9z", fill: props.name === "sortUp" ? "#8a84c4" : "currentColor" }),
      h("path", { d: "M1 19h16l-8 9z" }),
    ]);
  }
  const stroke = strokes[props.name];
  return h(
    "svg",
    {
      viewBox: "0 0 24 24",
      fill: stroke ? "none" : "currentColor",
      stroke: stroke ? "currentColor" : "none",
      "stroke-width": 1.9,
      "fill-rule": props.name === "dock" ? "evenodd" : "nonzero",
      "aria-hidden": "true",
    },
    [h("path", { d: stroke || fills[props.name] })]
  );
};
Icon.props = ["name"];

const navGroups = [
  [
    { label: "Accounts", icon: "account", active: true },
    { label: "Trash", icon: "trash" },
    { label: "Teams", icon: "teams" },
    { label: "Groups", icon: "groups" },
    { label: "Extensions", icon: "extension" },
    { label: "Proxies", icon: "proxy" },
    { label: "Synchronizer", icon: "sync" },
  ],
  [
    { label: "Automation", icon: "robot", more: true },
    { label: "Email", icon: "email", more: true },
    { label: "Automation Hub", icon: "laptop" },
    { label: "Database", icon: "database" },
  ],
  [
    { label: "Import cookies", icon: "cookie" },
    { label: "Backups", icon: "note", more: true },
    { label: "Settings", icon: "settings", more: true },
  ],
];

const tools = ["cloudUp", "cloudDown", "folderUp", "folderDown", "hidden"];
const disabledActions = ["play", "stop", "down", "network", "playlist"];
const rightActions = ["tag", "globeKey", "globe", "settings", "split"];

const menu = [
  { label: "Assign tags", icon: "tag", tone: "dim" },
  { label: "Assign groups", icon: "people", tone: "dim" },
  { line: true },
  { label: "Export accounts to TXT", icon: "share", tone: "dim" },
  { label: "Import accounts from TXT", icon: "tray", tone: "" },
  { line: true },
  { label: "Assign proxies", icon: "link", tone: "dim" },
  { gap: true },
  { label: "Import accounts from other browsers", icon: "swap", tone: "" },
  { label: "Export cookies", icon: "cookie", tone: "dim" },
  { line: true },
  { label: "Delete extension data", icon: "extension", tone: "danger" },
];

const rows = [
  { name: "test1", created: "13.05.2026 18:04", date: "13.05.2026", time: "18:04:59", proxy: "active", group: "test1" },
  { name: "test2", created: "13.05.2026 18:04", group: "test1" },
];

const favorites = ["doc", "dir", "downloads", "desktop", "appstore", "bank", "picture", "film", "music", "dir", "dir", "dir", "dir", "dir", "dir"];

const files = [
  { name: "acc_2026-05-13_19-57-41.txt", size: "739 bytes", kind: "Plain Text", date: "Сьогодні, 19:57", state: "ready" },
  { name: "cookie_test1_1778690415263.json", size: "470 bytes", kind: "JSON document", date: "Сьогодні, 19:40", state: "locked" },
  ...Array.from({ length: 22 }, () => ({ state: "" })),
];

// Darkness of the blurred names, one digit per cell; a dot is light noise
const shades = [
  "2..333........3", "...............", "44....5......3.", "..........252..", "...............",
  ".........2.4...", "44.3.5.........", "....2222...3333", ".3.2.........5.", ".....5...4.....",
  "...............", "3.5.....2.5...5", "......5522.3...", ".....3.37.....4", ".3354...4......",
  "...255..6......", "....5..333.....", ".......5.....3.", "...............", "3..3......6....",
  "..5....3.....3.", "3.......3......", "533.....222..3.", ".....3.4....4..", "...............",
  "....3.....5....", "..5...5.4..444.", ".444.......33..", ".3............5", ".4.............",
  "5..............", ".......5..3....", "3.4....3....3..", "44..........4..", "....4...53.....",
  ".........63....", "....4...3...3.5", ".6......2222.6.", "6333...........", ".4...74..7.....",
  "............4.3", ".3.5...44......", "5......4....4..", "...33.3...5....", "...5..3.5..4...",
  "44.3..3......3.", "5..4444......3.", ".6....3.3.5....", "....333...3....", "...3...2...2...",
  "...4.....64....", "44.4.44........", "4.......5.5....", ".8.......3.....", "....111.4......",
  "8...........5..", "333...5....44..", "36.5...5.......", ".....3....5337.", ".5....3.3....5.",
  "66......44.3...", "....44...4...3.", ".4.....3.5.....", ".444.44........", "73..6.444..5...",
  "...2..2......45", "83.3.....7.6...", ".36...5.....4..", "333.5...3.44...", ".......4......5",
  ".2.......4.2...", "8....5..5...3..", ".86....2...3...", ".........3..2..", "..9...43...3...",
  "3.46.....4..3..", "..4......555...",
];

let seed = 7;
const noise = () => {
  seed = (seed * 16807) % 2147483647;
  return Math.max(0, Math.floor((seed / 2147483647) * 5) - 2);
};

const mosaic = shades.flatMap((line, y) =>
  [...line].map((ch, x) => {
    const level = ch === "." ? noise() : Number(ch);
    const g = 255 - level * 14;
    return { key: y * 15 + x, x, y, fill: `rgb(${g}, ${g}, ${g})` };
  })
);
</script>

<style>
body {
  background: #1b1048;
}
</style>

<style scoped>
* {
  box-sizing: border-box;
}

.app {
  position: relative;
  display: flex;
  min-height: 100vh;
  background: #6f6f71;
  border-radius: 20px;
  overflow: hidden;
  box-shadow: inset 0 2px 0 #98989a;
  font-family: Inter, "Liberation Sans", sans-serif;
  font-size: 28px;
  color: #cdcdcd;
}

button,
input,
select {
  font: inherit;
  color: inherit;
  background: none;
  border: 0;
  padding: 0;
  margin: 0;
  outline: 0;
}

select,
input[type="checkbox"] {
  appearance: none;
}

a {
  color: inherit;
  text-decoration: none;
}

svg {
  display: block;
  flex: none;
}

.i20 { width: 20px; height: 20px; }
.i24 { width: 24px; height: 24px; }
.i32 { width: 32px; height: 32px; }
.i34 { width: 34px; height: 34px; }
.i36 { width: 36px; height: 36px; }
.i40 { width: 40px; height: 40px; }
.i42 { width: 42px; height: 42px; }

.icon-btn {
  display: flex;
  color: #b4b4b5;
}

.icon-btn.faded,
.text-btn.faded {
  color: #828284;
}

.icon-btn.bright {
  color: #c8c8c9;
}

/* sidebar */
.sidebar {
  display: flex;
  flex-direction: column;
  flex: none;
  width: 464px;
  border-left: 2px solid #78787a;
  border-right: 2px solid #77777a;
}

.lights {
  display: flex;
  gap: 13px;
  padding: 13px 11px 0;
}

.light {
  width: 22px;
  height: 22px;
  border-radius: 50%;
}

.black { background: #000; }
.yellow { background: #f4cf43; }
.green { background: #62c762; }

.brand {
  display: flex;
  align-items: center;
  justify-content: space-between;
  height: 120px;
  padding: 38px 54px 18px 50px;
  border-bottom: 2px solid #77777a;
}

.logo {
  display: flex;
  align-items: baseline;
  font-size: 44px;
  line-height: 80px;
  font-weight: 600;
  color: #7b76ae;
}

.logo-a {
  font-size: 84px;
  font-style: italic;
  font-weight: 500;
  line-height: 80px;
}

.socials {
  display: flex;
  gap: 17px;
  margin: 18px 14px 0;
  padding-bottom: 22px;
  border-bottom: 2px solid #77777a;
}

.social {
  display: flex;
  flex: 1;
  align-items: center;
  justify-content: center;
  gap: 13px;
  height: 76px;
  border-radius: 24px;
  font-weight: 600;
  color: #cfcfcf;
}

.bot { background: #7c9cb6; }
.support { background: #8e8abd; }

.nav {
  flex: 1;
  padding: 19px 14px 0;
}

.nav-group {
  display: flex;
  flex-direction: column;
  gap: 3px;
  margin: 0;
  padding: 0;
  list-style: none;
}

.nav-group + .nav-group {
  margin-top: 14px;
  padding-top: 16px;
  border-top: 2px solid #77777a;
}

.nav-item {
  display: flex;
  align-items: center;
  gap: 13px;
  height: 69px;
  padding-left: 17px;
  border-radius: 16px;
}

.nav-item.active {
  background: #757575;
}

.nav-item svg {
  color: #b4b4b5;
}

.nav-more {
  margin-left: 2px;
}

.profile {
  margin: 0 14px 16px;
  border: 2px solid #787878;
  border-radius: 34px;
  background: #757575;
}

.profile-main {
  display: flex;
  align-items: center;
  width: 100%;
  height: 89px;
  padding: 0 19px 0 17px;
  border-bottom: 2px solid #78787a;
  font-size: 31px;
}

.avatar {
  display: flex;
  align-items: center;
  justify-content: center;
  width: 51px;
  height: 51px;
  border: 2px solid #c0c0c0;
  border-radius: 50%;
  color: #b0b0b0;
}

.profile-name {
  flex: 1;
  padding-left: 20px;
  text-align: left;
}

.profile-more {
  display: flex;
  justify-content: center;
  width: 100%;
  padding: 2px 0;
  color: #b4b4b5;
}

.drive {
  display: flex;
  align-items: center;
  height: 94px;
  padding: 0 25px;
  border-top: 2px solid #77777a;
  font-size: 25px;
}

.drive-logo {
  width: 40px;
  height: 36px;
}

.drive-name {
  flex: 1;
  padding-left: 17px;
}

.switch {
  display: flex;
  justify-content: flex-end;
  width: 72px;
  height: 42px;
  padding: 4px;
  border-radius: 21px;
  background: #8580c0;
}

.switch::before {
  content: "";
  width: 34px;
  height: 34px;
  border-radius: 50%;
  background: #d0d0d0;
}

.tools {
  display: flex;
  align-items: center;
  justify-content: space-between;
  height: 77px;
  padding: 0 40px 0 38px;
  border-top: 2px solid #77777a;
}

.update-wrap {
  padding: 17px 25px 3px 24px;
  border-top: 2px solid #77777a;
}

.update {
  display: flex;
  align-items: center;
  justify-content: center;
  gap: 18px;
  width: 100%;
  height: 63px;
  border-radius: 16px;
  background: #8580c0;
  color: #d4d4d8;
  font-size: 25px;
  font-weight: 500;
}

/* main */
.main {
  position: relative;
  display: flex;
  flex-direction: column;
  flex: 1;
  min-width: 0;
}

.watermark {
  position: absolute;
  inset: 0;
  width: 100%;
  height: 100%;
  fill: #717173;
}

.header {
  position: relative;
  z-index: 1;
  display: flex;
  align-items: center;
  height: 160px;
  padding: 0 51px 0 41px;
}

h1 {
  margin: 0 20px 0 0;
  font-size: 39px;
  font-weight: 500;
}

.select {
  display: flex;
  align-items: center;
  height: 76px;
  padding: 0 10px 0 22px;
  border: 2px solid #78787a;
  border-radius: 18px;
  background: #6e6e6e;
  color: #d2d2d2;
}

.select select {
  flex: 1;
  min-width: 0;
}

.badge {
  display: flex;
  align-items: center;
  justify-content: center;
  min-width: 38px;
  height: 30px;
  margin-right: 9px;
  padding: 0 10px;
  border: 1px solid #747476;
  border-radius: 8px;
  font-size: 25px;
}

.groups { width: 315px; }
.filters { width: 319px; margin-right: 18px; }
.conditions { width: 315px; margin-right: 17px; padding-left: 16px; }
.columns { width: 231px; padding-left: 16px; }

.actions {
  display: flex;
  align-items: center;
  gap: 50px;
  margin: 0 36px 0 34px;
}

.actions.wide {
  gap: 54px;
}

.vline {
  width: 2px;
  height: 76px;
  background: #77777a;
}

.text-btn {
  display: flex;
  align-items: center;
  gap: 16px;
}

.accent {
  color: #8a84c4;
}

.menu-anchor {
  position: relative;
}

.menu {
  position: absolute;
  top: 60px;
  left: -18px;
  width: 616px;
  padding: 9px 0;
  border: 2px solid #737374;
  border-radius: 30px;
  background: #6e6e6e;
  box-shadow: 0 10px 50px rgba(0, 0, 0, 0.04);
}

.menu-item {
  display: flex;
  align-items: center;
  gap: 12px;
  width: 100%;
  height: 80px;
  padding-left: 37px;
  color: #cfcfcf;
  white-space: nowrap;
}

.menu-item.dim { color: #929292; }
.menu-item.danger { color: #8e6a70; }

.menu-line {
  height: 2px;
  margin: 10px 12px 11px;
  background: #78787a;
}

.menu-gap {
  height: 946px;
}

.header-right {
  display: flex;
  gap: 46px;
  margin-left: auto;
}

.panel {
  position: relative;
  display: flex;
  flex-direction: column;
  flex: 1;
  margin: 0 35px 0 42px;
  padding: 33px 33px 3px;
  border: 2px solid #747475;
  border-radius: 40px;
  background: #6e6e6e;
}

.toolbar {
  display: flex;
  align-items: center;
  padding-bottom: 32px;
  border-bottom: 2px solid #78787a;
}

.add {
  display: flex;
  align-items: center;
  justify-content: center;
  gap: 16px;
  width: 288px;
  height: 76px;
  border-radius: 16px;
  background: #8580c0;
  color: #d4d4d8;
  font-weight: 500;
}

.copy {
  margin: 0 42px 0 34px;
}

.search {
  display: flex;
  align-items: center;
  flex: 1;
  height: 76px;
  margin: 0 22px 0 25px;
  padding-left: 23px;
  border: 2px solid #78787a;
  border-radius: 18px;
  color: #b8b8b8;
  font-size: 27px;
}

.search input {
  flex: 1;
  height: 44px;
  margin-left: 15px;
  padding-left: 25px;
  border-left: 2px solid #78787a;
}

.search input::placeholder {
  color: #8f8f8f;
}

.accounts {
  width: 100%;
  margin-top: 23px;
  border-spacing: 0;
  table-layout: fixed;
}

.c-check { width: 92px; }
.c-name { width: 843px; }
.c-run { width: 420px; }
.c-proxy { width: 745px; }
.c-note { width: 380px; }
.c-groups { width: 534px; }

.accounts th {
  height: 82px;
  padding: 0 20px;
  background: #707173;
  color: #b2b2b3;
  font-weight: 500;
  text-align: left;
}

.accounts th:first-child {
  border-radius: 24px 0 0 24px;
}

.accounts td {
  height: 124px;
  padding: 17px 20px 0;
}

.accounts .check-cell {
  padding-left: 23px;
}

.check-cell input {
  display: block;
  width: 33px;
  height: 33px;
  border: 2px solid #7c7c7d;
  border-radius: 8px;
}

.sort {
  display: inline-block;
  width: 18px;
  height: 30px;
  margin-left: 14px;
  vertical-align: -3px;
  color: #8d8d8e;
}

.name-cell {
  display: flex;
  align-items: center;
}

.start {
  display: flex;
  align-items: center;
  justify-content: center;
  gap: 16px;
  width: 210px;
  height: 76px;
  border: 2px solid #7a76a4;
  border-radius: 16px;
  color: #8a84c4;
  font-weight: 500;
}

.start-more { margin-left: 28px; }
.row-dots { margin: 0 33px 0 43px; }

.two-lines {
  display: flex;
  flex-direction: column;
  line-height: 42px;
  color: #d2d2d2;
}

.two-lines small {
  font-size: 26px;
  color: #a8a8a8;
}

.two-lines .time {
  color: #b0b0b0;
}

.proxy-cell {
  display: flex;
  flex-direction: column;
  align-items: flex-start;
  gap: 20px;
  margin-bottom: -4px;
  padding-top: 7px;
}

.proxy-cell .icon-btn {
  margin-left: 11px;
}

.status {
  display: flex;
  align-items: center;
  gap: 13px;
  height: 42px;
  padding: 0 18px 0 16px;
  border-radius: 14px;
  background: #707173;
  font-size: 25px;
  color: #93b9a0;
}

.status::before {
  content: "";
  width: 22px;
  height: 22px;
  border-radius: 50%;
  background: #93bf9f;
}

.note { margin-left: 17px; }
.add-tag { margin-left: 10px; }

.group-tag {
  display: inline-flex;
  align-items: center;
  height: 50px;
  padding: 0 11px;
  border: 2px solid #777e9c;
  border-radius: 12px;
  color: #7a819f;
}

.hscroll {
  margin: auto 12px 0 2px;
}

.hthumb {
  width: 70%;
  height: 17px;
  border-radius: 9px;
  background: #78787b;
}

.pager {
  position: relative;
  display: flex;
  align-items: center;
  justify-content: flex-end;
  gap: 30px;
  height: 215px;
  padding: 0 50px 38px 0;
  font-size: 27px;
  color: #a4a4a6;
}

.pager input {
  width: 177px;
  height: 76px;
  margin: 0 5px;
  border: 2px solid #77777a;
  border-radius: 18px;
  background: #6e6e6e;
  font-size: 28px;
  color: #d2d2d2;
  text-align: center;
}

/* file picker */
.overlay {
  position: absolute;
  inset: 0;
  z-index: 2;
  display: flex;
  align-items: flex-start;
  justify-content: center;
  padding: 571px 0 0 7px;
}

.dialog {
  position: relative;
  display: flex;
  width: 1629px;
  height: 980px;
  border-radius: 46px;
  background: #fff;
  box-shadow: 0 0 3px rgba(0, 0, 0, 0.5), 0 30px 90px rgba(0, 0, 0, 0.32);
  font-size: 19px;
  color: #1d1d1d;
}

.places {
  display: flex;
  width: 278px;
  padding: 12px 0;
  border-radius: 46px 0 0 46px;
  background: #f1f1f1;
  box-shadow: 20px 0 40px rgba(0, 0, 0, 0.03);
}

.places-list {
  flex: 1;
  margin-left: 12px;
  padding: 15px 0 0 25px;
  border-radius: 34px 0 0 34px;
  background: #f6f6f6;
  overflow: hidden;
}

.place {
  display: flex;
  align-items: center;
  gap: 8px;
  height: 48px;
  font-weight: 500;
  white-space: nowrap;
}

.place svg {
  stroke-width: 1.5;
}

.place .i32 {
  margin: 0 2px;
}

h2 {
  height: 48px;
  margin: 0;
  padding-top: 24px;
  font-size: 17px;
  font-weight: 600;
  line-height: 24px;
  color: #7c7c7c;
}

.favorites {
  position: relative;
}

.mosaic {
  position: absolute;
  top: 5px;
  left: 41px;
  width: 141px;
  height: 701px;
}

.vtrack {
  width: 22px;
  padding: 3px 5px 0 0;
  background: #f3f3f3;
}

.vthumb {
  height: 832px;
  border-radius: 9px;
  background: #808080;
}

.browser {
  display: flex;
  flex-direction: column;
  flex: 1;
}

.picker-bar {
  display: flex;
  align-items: center;
  height: 95px;
  padding: 0 29px;
}

.pill {
  display: flex;
  align-items: center;
  justify-content: center;
  height: 36px;
  padding: 0 18px;
  border-radius: 10px;
  background: #ebebeb;
  font-weight: 500;
}

.nav-pill {
  width: 70px;
  gap: 5px;
  padding: 0;
  color: #b0b0b0;
}

.pill-line {
  width: 1px;
  height: 20px;
  background: #d0d0d0;
}

.view-pill {
  width: 98px;
  justify-content: space-between;
  margin-left: 13px;
  padding: 0 9px 0 21px;
}

.folder {
  gap: 4px;
  width: 345px;
  margin-left: 182px;
  padding: 0 8px 0 18px;
}

.folder select {
  flex: 1;
}

.find {
  display: flex;
  align-items: center;
  gap: 3px;
  width: 294px;
  height: 38px;
  margin-left: auto;
  padding-left: 9px;
  border: 1px solid #ededed;
  border-radius: 10px;
  color: #777;
}

.find input {
  flex: 1;
  min-width: 0;
}

.find input::placeholder {
  color: #777;
}

.files {
  width: 100%;
  border-spacing: 0;
  table-layout: fixed;
}

.f-gutter { width: 15px; }
.f-size { width: 146px; }
.f-kind { width: 173px; }
.f-date { width: 282px; }

.files th {
  height: 45px;
  padding: 0;
  border-top: 2px solid #e8e8e8;
  border-bottom: 2px solid #e8e8e8;
  font-size: 17px;
  font-weight: 400;
  color: #777;
  text-align: left;
}

.files th b {
  flex: 1;
  font-weight: 600;
  color: #222;
}

.files .f-name div {
  display: flex;
  align-items: center;
}

.files th.f-name {
  padding: 0 8px 0 55px;
}

.split {
  height: 30px;
  padding-left: 10px;
  border-left: 2px solid #e8e8e8;
  line-height: 30px;
}

.files tbody::before {
  content: "";
  display: block;
  height: 6px;
}

.files td {
  height: 30px;
  padding: 0 0 0 12px;
  white-space: nowrap;
  color: #7a7a7a;
}

.files td:first-child,
.files td:last-child {
  padding: 0;
}

.files td.f-name {
  padding-left: 24px;
  font-size: 20px;
}

.files td.f-right {
  padding: 0 8px 0 0;
  text-align: right;
}

.files tbody tr:nth-child(even) td:not(:first-child):not(:last-child) {
  background: #f3f5f4;
}

.files td:nth-child(2) { border-radius: 12px 0 0 12px; }
.files td:nth-child(5) { border-radius: 0 12px 12px 0; }

.files .ready td.f-name { color: #1d1d1d; }
.files .locked td { color: #b9b9b9; }

.file-icon {
  width: 18px;
  height: 22px;
  margin-right: 12px;
}

.picker-footer {
  display: flex;
  align-items: center;
  gap: 15px;
  flex: 1;
  margin-top: 14px;
  padding: 0 31px 0 29px;
  border-top: 2px solid #e8e8e8;
}

.grow {
  flex: 1;
}

.pill.cancel {
  width: 111px;
}

.pill.off {
  width: 107px;
  background: #f5f5f5;
  color: #b9b9b9;
}

.marks {
  position: absolute;
  top: 0;
  left: 0;
  width: 2000px;
  height: 980px;
}
</style>
